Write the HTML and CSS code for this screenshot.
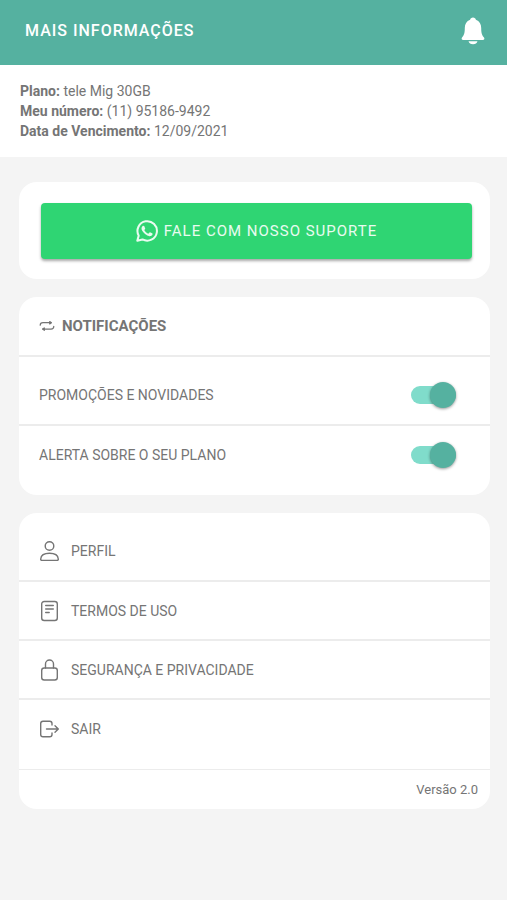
FILE: index.html
```html
<!DOCTYPE html>
<html lang="pt-BR">
<head>
  <meta charset="utf-8">
  <meta name="viewport" content="width=device-width, initial-scale=1">
  <title>Mais informações</title>
  <link rel="stylesheet" href="styles.css">
</head>
<body>
  <header class="topbar">
    <h1 class="topbar-title">MAIS INFORMAÇÕES</h1>
    <button class="bell" type="button" aria-label="Avisos">
      <svg width="24" height="28" viewBox="0 0 24 28" fill="currentColor" aria-hidden="true">
        <path d="M12 .5c1.600 0 2.600 1 2.900 2.200 3.600 1.300 5.300 4.300 5.300 8.300 0 5.500 1 7.600 2.800 9.400.9 1.200.2 2.600-1.200 2.600H2.200C.8 23 .1 21.600 1 20.400c1.800-1.800 2.800-3.900 2.800-9.400 0-4 1.700-7 5.300-8.300C9.400 1.500 10.400.5 12 .5z"/>
        <path d="M7.500 24.300h9c-.5 1.900-2.200 3-4.500 3s-4-1.100-4.500-3z"/>
      </svg>
    </button>
  </header>

  <section class="plan">
    <p><strong>Plano:</strong> tele Mig 30GB</p>
    <p><strong>Meu número:</strong> (11) 95186-9492</p>
    <p><strong>Data de Vencimento:</strong> 12/09/2021</p>
  </section>

  <main class="content">
    <section class="card card-support">
      <button class="support" type="button">
        <svg width="22" height="22" viewBox="0 0 24 24" fill="currentColor" aria-hidden="true">
          <path d="M17.472 14.382c-.297-.149-1.758-.867-2.030-.967-.273-.099-.471-.148-.67.150-.197.297-.767.966-.94 1.164-.173.199-.347.223-.644.075-.297-.150-1.255-.463-2.390-1.475-.883-.788-1.480-1.761-1.653-2.059-.173-.297-.018-.458.130-.606.134-.133.298-.347.446-.520.149-.174.198-.298.298-.497.099-.198.050-.371-.025-.520-.075-.149-.669-1.612-.916-2.207-.242-.579-.487-.500-.669-.510-.173-.008-.371-.010-.570-.010-.198 0-.520.074-.792.372-.272.297-1.040 1.016-1.040 2.479 0 1.462 1.065 2.875 1.213 3.074.149.198 2.096 3.200 5.077 4.487.709.306 1.262.489 1.694.625.712.227 1.360.195 1.871.118.571-.085 1.758-.719 2.006-1.413.248-.694.248-1.289.173-1.413-.074-.124-.272-.198-.570-.347z"/>
          <path fill="none" stroke="currentColor" stroke-width="2.200" stroke-linejoin="round" d="M1.400 22.700l1.550-5.650A10.600 10.600 0 1 1 7.100 21.200z"/>
        </svg>
        <span>FALE COM NOSSO SUPORTE</span>
      </button>
    </section>

    <section class="card">
      <h2 class="card-title">
        <svg width="16" height="12" viewBox="0 0 16 12" fill="none" stroke="currentColor" stroke-width="1.200" stroke-linecap="round" stroke-linejoin="round" aria-hidden="true">
          <path d="M1.200 5.200C1.200 3.600 2.200 2.700 4 2.700h8"/>
          <path d="M14.800 6.300c0 1.800-1 2.800-2.800 2.800H4"/>
          <path fill="currentColor" d="M10.700 1.500l1.700 1.200-1.700 1.200zM5.300 7.900L3.600 9.100l1.700 1.200z"/>
        </svg>
        NOTIFICAÇÕES
      </h2>
      <div class="rows">
        <label class="row">
          <span>PROMOÇÕES E NOVIDADES</span>
          <input class="switch" type="checkbox" role="switch" checked>
        </label>
        <label class="row">
          <span>ALERTA SOBRE O SEU PLANO</span>
          <input class="switch" type="checkbox" role="switch" checked>
        </label>
      </div>
    </section>

    <section class="card">
      <nav class="rows">
        <a class="row row-link" href="#perfil">
          <svg class="icon" viewBox="0 0 20 22" aria-hidden="true">
            <circle cx="10" cy="6" r="4.300"/>
            <path d="M1.200 19c.3-3.500 3.800-5.700 8.800-5.700s8.500 2.200 8.800 5.700c.1.900-.4 1.400-1.300 1.400h-15c-.9 0-1.400-.5-1.300-1.400z"/>
          </svg>
          PERFIL
        </a>
        <a class="row row-link" href="#termos">
          <svg class="icon" viewBox="0 0 20 22" aria-hidden="true">
            <rect x="2.200" y="1.500" width="15.600" height="19" rx="2.500"/>
            <path d="M6.200 5.500h7.600M6.200 9h7.600M6.200 12.500h3.500"/>
          </svg>
          TERMOS DE USO
        </a>
        <a class="row row-link" href="#privacidade">
          <svg class="icon" viewBox="0 0 20 22" aria-hidden="true">
            <rect x="2.200" y="9" width="15.600" height="12" rx="2.500"/>
            <path d="M6 9V5a4 4 0 0 1 8 0v4"/>
          </svg>
          SEGURANÇA E PRIVACIDADE
        </a>
        <a class="row row-link" href="#sair">
          <svg class="icon" viewBox="0 0 20 22" aria-hidden="true">
            <path d="M12.500 7V5.500c0-1.500-.8-2.300-2.300-2.300H3.500C2 3.200 1.200 4 1.200 5.500v11c0 1.500.8 2.300 2.300 2.300h6.700c1.500 0 2.300-.8 2.300-2.300V15M7 11h11.500M15.500 7.700l3.300 3.300-3.300 3.300"/>
          </svg>
          SAIR
        </a>
      </nav>
      <p class="version">Versão 2.0</p>
    </section>
  </main>
</body>
</html>
```

FILE: styles.css
```css
* {
  box-sizing: border-box;
}

body {
  margin: 0;
  min-height: 100vh;
  background: #f4f4f4;
  color: #757575;
  font-family: Roboto, "Liberation Sans", sans-serif;
  font-size: 14px;
  line-height: 20px;
}

h1,
h2,
p {
  margin: 0;
}

button {
  border: 0;
  font: inherit;
  cursor: pointer;
}

.topbar {
  display: flex;
  align-items: center;
  justify-content: space-between;
  padding: 17px 22px 20px 25px;
  background: #55b1a0;
  color: #fff;
}

.topbar-title {
  font-size: 16px;
  line-height: 24px;
  font-weight: 500;
  letter-spacing: 1px;
}

.bell {
  display: flex;
  padding: 0;
  background: none;
  color: inherit;
}

.plan {
  padding: 16px 20px;
  background: #fff;
}

.content {
  display: flex;
  flex-direction: column;
  gap: 18px;
  padding: 25px 17px 25px 19px;
}

.card {
  overflow: hidden;
  border-radius: 18px;
  background: #fff;
}

.card-support {
  padding: 21px 18px 20px 22px;
}

.support {
  display: flex;
  align-items: center;
  justify-content: center;
  gap: 6px;
  width: 100%;
  height: 56px;
  border-radius: 4px;
  background: #2fd573;
  box-shadow: 0 2px 3px rgba(0, 0, 0, 0.35);
  color: #e9fbf0;
  font-size: 15px;
  letter-spacing: 1px;
}

.card-title {
  display: flex;
  align-items: center;
  gap: 7px;
  padding: 19px 20px;
  border-bottom: 2px solid #ececec;
  font-size: 15px;
  line-height: 20px;
  font-weight: 700;
}

.rows {
  padding: 8px 0 12px;
}

.row {
  display: flex;
  align-items: center;
  justify-content: space-between;
  height: 59px;
  padding: 0 34px 0 20px;
  color: inherit;
  text-decoration: none;
}

.row + .row {
  border-top: 2px solid #ececec;
}

.row-link {
  justify-content: flex-start;
  gap: 11px;
}

.icon {
  width: 21px;
  height: 22px;
  fill: none;
  stroke: currentColor;
  stroke-width: 1.4;
  stroke-linecap: round;
  stroke-linejoin: round;
}

.switch {
  appearance: none;
  display: grid;
  align-items: center;
  width: 45px;
  height: 26px;
  margin: 0;
  cursor: pointer;
}

.switch::before,
.switch::after {
  content: "";
  grid-area: 1 / 1;
}

.switch::before {
  height: 18px;
  border-radius: 9px;
  background: #c4c4c4;
}

.switch::after {
  justify-self: start;
  width: 26px;
  height: 26px;
  border-radius: 50%;
  background: #f4f4f4;
  box-shadow: 0 1px 3px rgba(0, 0, 0, 0.4);
}

.switch:checked::before {
  background: #80dccb;
}

.switch:checked::after {
  justify-self: end;
  background: #55b1a0;
}

.version {
  padding: 10px 12px 9px;
  border-top: 1px solid #ececec;
  text-align: right;
  font-size: 13px;
}
```
